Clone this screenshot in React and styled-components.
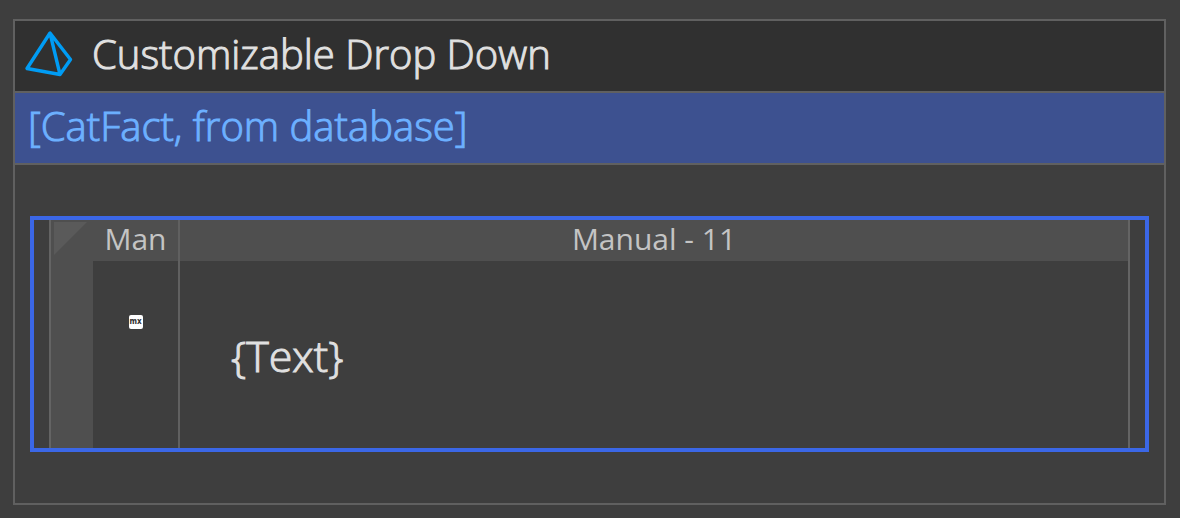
import React from "react";
import styled, { createGlobalStyle } from "styled-components";

const GlobalStyle = createGlobalStyle`
  *, *::before, *::after { box-sizing: border-box; }
  body {
    margin: 0;
    background: #3e3e3e;
    color: #e0e0e0;
    font-family: "Open Sans", "Noto Sans", sans-serif;
    font-weight: 300;
  }
`;

const Page = styled.main`
  padding: 19px 14px 13px 13px;
`;

const Panel = styled.section`
  border: 2px solid #606060;
`;

const PanelHeader = styled.header`
  display: flex;
  align-items: center;
  gap: 18px;
  height: 70px;
  padding: 0 9px 4px;
  background: #303030;
`;

const Title = styled.h1`
  margin: 0;
  font-size: 40px;
  line-height: 56px;
  font-weight: inherit;
  -webkit-text-stroke: 1px currentColor;
  white-space: nowrap;
`;

const SourceBar = styled.div`
  display: flex;
  align-items: center;
  height: 74px;
  padding: 0 13px 4px;
  border: solid #606060;
  border-width: 2px 0;
  background: #3d5190;
  color: #6cb0ff;
  font-size: 40px;
  line-height: 56px;
  -webkit-text-stroke: 1px currentColor;
  white-space: nowrap;
`;

const PanelBody = styled.div`
  padding: 51px 15px;
`;

const Selection = styled.div`
  border: 4px solid #3b67e6;
  padding: 0 15px;
`;

const Grid = styled.table`
  width: 100%;
  table-layout: fixed;
  border-collapse: separate;
  border-spacing: 0;
  border: solid #646464;
  border-width: 0 2px;
`;

const Column = styled.col`
  width: ${(p) => p.$width || "auto"};
`;

const ColumnHead = styled.th`
  height: 41px;
  padding: 0 0 4px;
  background: #4f4f4f;
  color: #c4c4c4;
  font-size: 30px;
  line-height: 36px;
  font-weight: 400;
  text-align: center;
  border-right: ${(p) => (p.$divided ? "2px solid #606060" : "0")};
`;

const Corner = styled.td`
  padding: 2px 3px;
  background: #4f4f4f;
  vertical-align: top;

  svg { display: block; }
`;

const Gutter = styled.td`
  background: #4f4f4f;
`;

const Cell = styled.td`
  height: 187px;
  padding: ${(p) => p.$padding};
  vertical-align: top;
  border-right: ${(p) => (p.$divided ? "2px solid #606060" : "0")};
`;

const Binding = styled.div`
  font-size: 43px;
  line-height: 60px;
  -webkit-text-stroke: 1px currentColor;
`;

const Badge = styled.span`
  display: flex;
  align-items: center;
  justify-content: center;
  width: 14px;
  height: 14px;
  margin: 0 auto;
  border-radius: 2px;
  background: #ffffff;
  color: #303030;
  font-family: "DejaVu Sans Condensed", "DejaVu Sans", sans-serif;
  font-size: 8px;
  line-height: 12px;
  font-weight: 700;
`;

function PyramidIcon() {
  return (
    <svg width="50" height="50" viewBox="0 0 50 50" fill="none" stroke="#009cf4" strokeWidth="3.4" strokeLinejoin="round" aria-hidden="true">
      <path d="M26 4 L3 39.500 L36 45.500 L46.500 30.500 Z M26 4 L36 45.500" />
    </svg>
  );
}

export default function App() {
  return (
    <>
      <GlobalStyle />
      <Page>
        <Panel>
          <PanelHeader>
            <PyramidIcon />
            <Title>Customizable Drop Down</Title>
          </PanelHeader>
          <SourceBar>[CatFact, from database]</SourceBar>
          <PanelBody>
            <Selection>
              <Grid>
                <colgroup>
                  <Column $width="42px" />
                  <Column $width="87px" />
                  <Column />
                </colgroup>
                <thead>
                  <tr>
                    <Corner>
                      <svg width="33" height="33" aria-hidden="true">
                        <path d="M0 0H33L0 33Z" fill="#5a5a5a" />
                      </svg>
                    </Corner>
                    <ColumnHead scope="col" $divided>Man</ColumnHead>
                    <ColumnHead scope="col">Manual - 11</ColumnHead>
                  </tr>
                </thead>
                <tbody>
                  <tr>
                    <Gutter />
                    <Cell $padding="54px 0 0" $divided>
                      <Badge>mx</Badge>
                    </Cell>
                    <Cell $padding="65px 51px 0">
                      <Binding>{"{Text}"}</Binding>
                    </Cell>
                  </tr>
                </tbody>
              </Grid>
            </Selection>
          </PanelBody>
        </Panel>
      </Page>
    </>
  );
}
